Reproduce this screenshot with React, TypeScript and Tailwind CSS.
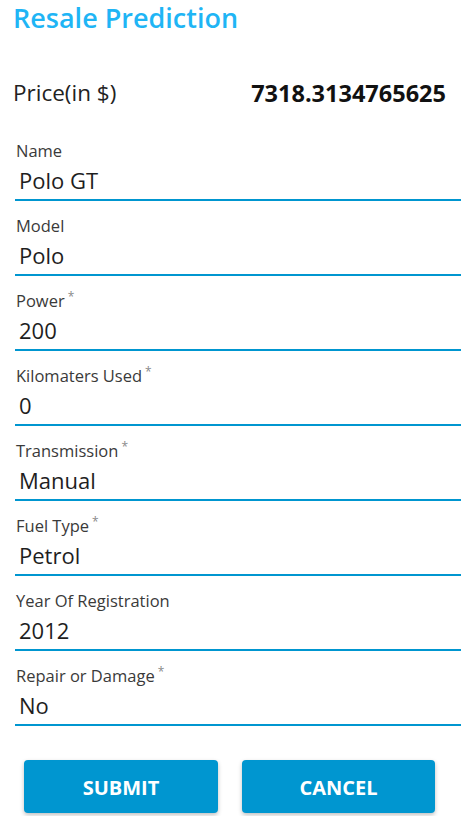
const fields: { label: string; value: string; required?: boolean }[] = [
  { label: "Name", value: "Polo GT" },
  { label: "Model", value: "Polo" },
  { label: "Power", value: "200", required: true },
  { label: "Kilomaters Used", value: "0", required: true },
  { label: "Transmission", value: "Manual", required: true },
  { label: "Fuel Type", value: "Petrol", required: true },
  { label: "Year Of Registration", value: "2012" },
  { label: "Repair or Damage", value: "No", required: true },
];

function Field({ label, value, required }: { label: string; value: string; required?: boolean }) {
  return (
    <div className="mt-[15px] pl-[15px]">
      <div className="border-b-2 border-[#0096d0] pb-[5px]">
        <div className="h-[20px] pl-[1px] text-[16.5px] leading-[20px] text-[#3a3a3a]">
          {label}
          {required && <sup className="ml-[3px] text-[12px] text-[#8a8a8a]">*</sup>}
        </div>
        <div className="mt-[5px] h-[28px] pl-[4px] text-[22px] leading-[28px] text-[#1e1e1e]">{value}</div>
      </div>
    </div>
  );
}

export default function App() {
  return (
    <main className="h-[816px] w-[461px] overflow-hidden bg-white font-['Open_Sans','Noto_Sans',sans-serif]">
      <h1 className="h-[36px] pl-[13px] text-[27px] font-semibold leading-[36px] text-[#1fb5f5]">
        Resale Prediction
      </h1>

      <div className="mt-[43px] flex h-[28px] items-center justify-between pl-[13px] pr-[15px] leading-[28px]">
        <span className="text-[22.5px] text-[#222]">Price(in $)</span>
        <span className="text-[23.5px] font-bold text-[#111]">7318.3134765625</span>
      </div>

      <form className="pt-[19px]">
        {fields.map((f) => (
          <Field key={f.label} {...f} />
        ))}

        <div className="mt-[34px] flex gap-[24px] pl-[24px]">
          <button
            type="button"
            className="h-[53px] w-[194px] rounded-[4px] bg-[#0096d0] pt-[3px] text-[20px] font-bold text-white shadow-[0_2px_4px_rgba(0,0,0,0.25)]"
          >
            SUBMIT
          </button>
          <button
            type="button"
            className="h-[53px] w-[193px] rounded-[4px] bg-[#0096d0] pt-[3px] text-[20px] font-bold text-white shadow-[0_2px_4px_rgba(0,0,0,0.25)]"
          >
            CANCEL
          </button>
        </div>
      </form>
    </main>
  );
}
